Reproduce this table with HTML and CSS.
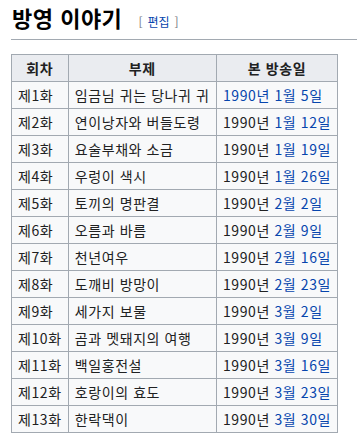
FILE: index.html
```html
<!DOCTYPE html>
<html lang="ko">
<head>
<meta charset="utf-8">
<link rel="stylesheet" href="styles.css">
</head>
<body>
<h2 class="heading"><span class="title">방영 이야기</span><span class="edit"><span class="br">[</span><a class="link">편집</a><span class="br">]</span></span></h2>
<table class="wikitable">
<colgroup><col class="c1"><col class="c2"><col class="c3"></colgroup>
<thead><tr><th>회차</th><th>부제</th><th>본 방송일</th></tr></thead>
<tbody>
<tr><td>제1화</td><td>임금님 귀는 당나귀 귀</td><td><a class="link">1990년 1월 5일</a></td></tr>
<tr><td>제2화</td><td>연이낭자와 버들도령</td><td>1990년 <a class="link">1월 12일</a></td></tr>
<tr><td>제3화</td><td>요술부채와 소금</td><td>1990년 <a class="link">1월 19일</a></td></tr>
<tr><td>제4화</td><td>우렁이 색시</td><td>1990년 <a class="link">1월 26일</a></td></tr>
<tr><td>제5화</td><td>토끼의 명판결</td><td>1990년 <a class="link">2월 2일</a></td></tr>
<tr><td>제6화</td><td>오름과 바름</td><td>1990년 <a class="link">2월 9일</a></td></tr>
<tr><td>제7화</td><td>천년여우</td><td>1990년 <a class="link">2월 16일</a></td></tr>
<tr><td>제8화</td><td>도깨비 방망이</td><td>1990년 <a class="link">2월 23일</a></td></tr>
<tr><td>제9화</td><td>세가지 보물</td><td>1990년 <a class="link">3월 2일</a></td></tr>
<tr><td>제10화</td><td>곰과 멧돼지의 여행</td><td>1990년 <a class="link">3월 9일</a></td></tr>
<tr><td>제11화</td><td>백일홍전설</td><td>1990년 <a class="link">3월 16일</a></td></tr>
<tr><td>제12화</td><td>호랑이의 효도</td><td>1990년 <a class="link">3월 23일</a></td></tr>
<tr><td>제13화</td><td>한락댁이</td><td>1990년 <a class="link">3월 30일</a></td></tr>
</tbody>
</table>
</body>
</html>
```
FILE: styles.css
```css
html, body { margin: 0; padding: 0; background: #fff; }
body {
  padding: 0 0 0 11px;
  font-family: "Noto Sans CJK KR", "Noto Sans", sans-serif;
  color: #202122;
}
.heading {
  margin: 0;
  padding: 3px 0 3px 1px;
  border-bottom: 1px solid #a2a9b1;
  font-size: 22px;
  line-height: 28px;
  font-weight: bold;
  color: #000;
  letter-spacing: 0.5px;
  display: flex;
  align-items: baseline;
}
.edit {
  margin-left: 16px;
  font-size: 12px;
  font-weight: normal;
  letter-spacing: 0;
  display: flex;
  gap: 5px;
}
.br { color: #72777d; }
.link { color: #0645ad; text-decoration: none; }
.wikitable {
  margin-top: 14px;
  border-collapse: collapse;
  width: 327px;
  background: #f8f9fa;
  border: 1px solid #a2a9b1;
  font-size: 14px;
  letter-spacing: 0.6px;
}
.c1 { width: 56px; }
.c2 { width: 153px; }
.c3 { width: 118px; }
.wikitable th, .wikitable td {
  border: 1px solid #a2a9b1;
  height: 26px;
  padding: 0 6px;
  line-height: 18px;
  white-space: nowrap;
}
.wikitable th {
  background: #eaecf0;
  font-weight: bold;
  text-align: center;
}
.wikitable td { text-align: left; }
```
